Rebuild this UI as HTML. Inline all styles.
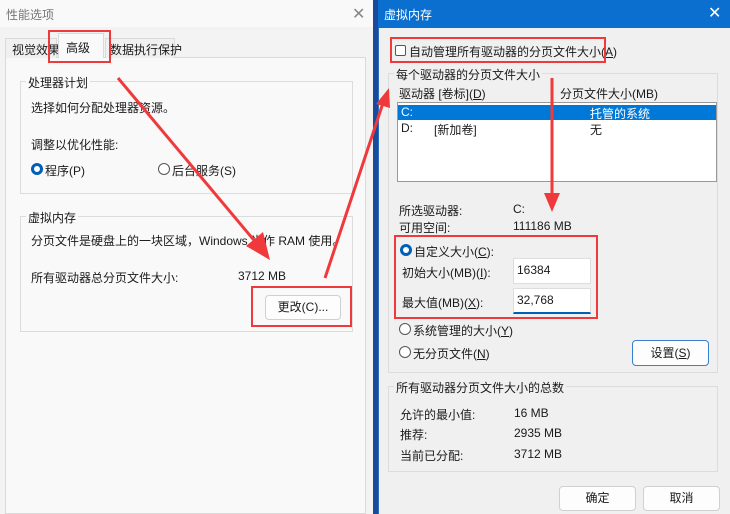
<!DOCTYPE html>
<html><head><meta charset="utf-8"><style>
*{margin:0;padding:0;box-sizing:border-box}
body{width:730px;height:514px;overflow:hidden;position:relative;background:#1a4a9a;font-family:"Liberation Sans","Noto Sans CJK SC",sans-serif;font-size:12px;color:#1a1a1a}
.a{position:absolute;white-space:nowrap}
.grp{position:absolute;border:1px solid #dcdcdc}
.lbl{position:absolute;background:inherit;padding:0 2px}
.btn{position:absolute;background:#fdfdfd;border:1px solid #d0d0d0;border-radius:4px;text-align:center}
.radio{position:absolute;width:12px;height:12px;border:1px solid #555;border-radius:50%;background:#fff}
.radio.on{border:3.5px solid #005fb8}
.red{position:absolute;border:2px solid #f0393b}
u{text-decoration:underline}
</style></head><body>
<!-- left dialog -->
<div class="a" style="left:0;top:0;width:373px;height:514px;background:#f3f3f3"></div>
<div class="a" style="left:0;top:0;width:373px;height:27px;background:#f9f9f9"></div>
<div class="a" style="left:6px;top:6px;color:#777;font-size:12px">性能选项</div>
<div class="a" style="left:352px;top:4px;color:#888;font-size:16px">✕</div>
<div class="a" style="left:5px;top:57px;width:361px;height:457px;background:#f9f9f9;border:1px solid #dadada"></div>
<div class="a" style="left:5px;top:38px;width:52px;height:20px;border:1px solid #dadada;border-bottom:none;background:#f0f0f0"></div>
<div class="a" style="left:12px;top:41px">视觉效果</div>
<div class="a" style="left:58px;top:33px;width:46px;height:25px;border:1px solid #dadada;border-bottom:none;background:#f9f9f9"></div>
<div class="a" style="left:66px;top:39px">高级</div>
<div class="a" style="left:105px;top:38px;width:70px;height:20px;border:1px solid #dadada;border-bottom:none;background:#f0f0f0"></div>
<div class="a" style="left:110px;top:41px">数据执行保护</div>
<div class="red" style="left:48px;top:30px;width:63px;height:33px"></div>
<div class="grp" style="left:20px;top:81px;width:333px;height:113px;background:#f9f9f9"></div>
<div class="a" style="left:26px;top:74px;background:#f9f9f9;padding:0 2px">处理器计划</div>
<div class="a" style="left:31px;top:99px">选择如何分配处理器资源。</div>
<div class="a" style="left:31px;top:136px">调整以优化性能:</div>
<div class="radio on" style="left:31px;top:163px"></div><div class="a" style="left:45px;top:162px">程序(P)</div>
<div class="radio" style="left:158px;top:163px"></div><div class="a" style="left:172px;top:162px">后台服务(S)</div>
<div class="grp" style="left:20px;top:216px;width:333px;height:116px;background:#f9f9f9"></div>
<div class="a" style="left:26px;top:209px;background:#f9f9f9;padding:0 2px">虚拟内存</div>
<div class="a" style="left:31px;top:232px">分页文件是硬盘上的一块区域，Windows 当作 RAM 使用。</div>
<div class="a" style="left:31px;top:269px">所有驱动器总分页文件大小:</div>
<div class="a" style="left:238px;top:269px">3712 MB</div>
<div class="btn" style="left:265px;top:295px;width:76px;height:25px;line-height:23px">更改(C)...</div>
<div class="red" style="left:251px;top:286px;width:101px;height:41px"></div>
<!-- right dialog -->
<div class="a" style="left:378px;top:0;width:352px;height:514px;background:#f0f0f0;border-left:1px solid #2a6fc0"></div>
<div class="a" style="left:378px;top:0;width:352px;height:28px;background:#0a6fcf"></div>
<div class="a" style="left:384px;top:6px;color:#fff">虚拟内存</div>
<div class="a" style="left:708px;top:3px;color:#fff;font-size:16px">✕</div>
<div class="a" style="left:395px;top:45px;width:11px;height:11px;border:1px solid #555;border-radius:2px;background:#fff"></div>
<div class="a" style="left:409px;top:43px">自动管理所有驱动器的分页文件大小(<u>A</u>)</div>
<div class="red" style="left:390px;top:37px;width:216px;height:26px"></div>
<div class="grp" style="left:388px;top:73px;width:330px;height:300px"></div>
<div class="a" style="left:394px;top:66px;background:#f0f0f0;padding:0 2px">每个驱动器的分页文件大小</div>
<div class="a" style="left:399px;top:85px">驱动器 [卷标](<u>D</u>)</div>
<div class="a" style="left:560px;top:85px">分页文件大小(MB)</div>
<div class="a" style="left:397px;top:102px;width:320px;height:80px;background:#fff;border:1px solid #999"></div>
<div class="a" style="left:398px;top:105px;width:318px;height:15px;background:#0078d7"></div>
<div class="a" style="left:401px;top:105px;color:#fff">C:</div>
<div class="a" style="left:590px;top:105px;color:#fff">托管的系统</div>
<div class="a" style="left:401px;top:121px">D:</div>
<div class="a" style="left:434px;top:121px">[新加卷]</div>
<div class="a" style="left:590px;top:121px">无</div>
<div class="a" style="left:399px;top:202px">所选驱动器:</div>
<div class="a" style="left:513px;top:202px">C:</div>
<div class="a" style="left:399px;top:219px">可用空间:</div>
<div class="a" style="left:513px;top:219px">111186 MB</div>
<div class="radio on" style="left:400px;top:244px"></div><div class="a" style="left:414px;top:243px">自定义大小(<u>C</u>):</div>
<div class="a" style="left:402px;top:264px">初始大小(MB)(<u>I</u>):</div>
<div class="a" style="left:513px;top:258px;width:78px;height:26px;background:#fff;border:1px solid #ddd;padding:4px 3px">16384</div>
<div class="a" style="left:402px;top:294px">最大值(MB)(<u>X</u>):</div>
<div class="a" style="left:513px;top:288px;width:78px;height:26px;background:#fff;border:1px solid #ddd;border-bottom:2px solid #005fb8;padding:4px 3px">32,768</div>
<div class="red" style="left:394px;top:235px;width:204px;height:84px"></div>
<div class="radio" style="left:399px;top:323px"></div><div class="a" style="left:413px;top:322px">系统管理的大小(<u>Y</u>)</div>
<div class="radio" style="left:399px;top:346px"></div><div class="a" style="left:413px;top:345px">无分页文件(<u>N</u>)</div>
<div class="btn" style="left:632px;top:340px;width:77px;height:26px;line-height:24px;border-color:#3a7fd0">设置(<u>S</u>)</div>
<div class="grp" style="left:388px;top:386px;width:330px;height:86px"></div>
<div class="a" style="left:394px;top:379px;background:#f0f0f0;padding:0 2px">所有驱动器分页文件大小的总数</div>
<div class="a" style="left:400px;top:406px">允许的最小值:</div><div class="a" style="left:514px;top:406px">16 MB</div>
<div class="a" style="left:400px;top:426px">推荐:</div><div class="a" style="left:514px;top:426px">2935 MB</div>
<div class="a" style="left:400px;top:447px">当前已分配:</div><div class="a" style="left:514px;top:447px">3712 MB</div>
<div class="btn" style="left:559px;top:486px;width:77px;height:25px;line-height:23px">确定</div>
<div class="btn" style="left:643px;top:486px;width:77px;height:25px;line-height:23px">取消</div>
<!-- arrows -->
<svg class="a" style="left:0;top:0" width="730" height="514">
<g stroke="#f0393b" fill="#f0393b">
<line x1="118" y1="78" x2="258" y2="245" stroke-width="3"/>
<polygon points="270,260 246,246 263,232" stroke="none"/>
<line x1="325" y1="278" x2="383" y2="103" stroke-width="3"/>
<polygon points="389,88 376,104 390,108" stroke="none"/>
<line x1="552" y1="78" x2="552" y2="195" stroke-width="3"/>
<polygon points="552,212 544,193 560,193" stroke="none"/>
</g></svg>
</body></html>
